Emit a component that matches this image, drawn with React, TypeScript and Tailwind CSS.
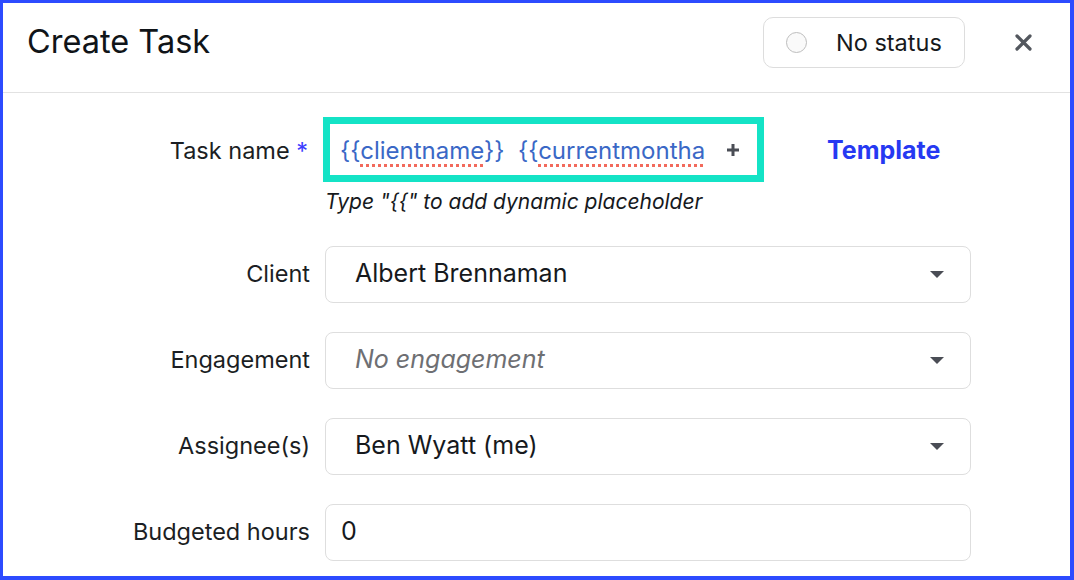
import React from 'react';

const Caret = () => (
  <svg width="14" height="7" viewBox="0 0 14 7" className="shrink-0">
    <path d="M0 0h14L7 7z" fill="#4a4d55" />
  </svg>
);

interface SelectRowProps {
  label: string;
  value: string;
  placeholder?: boolean;
}

const SelectRow: React.FC<SelectRowProps> = ({ label, value, placeholder }) => (
  <div className="flex items-center">
    <div className="w-[322px] pr-[15px] text-right text-[23.5px] text-[#1b1e23]">{label}</div>
    <div className="flex h-[57px] w-[646px] items-center justify-between rounded-lg border border-[#dedede] pl-[29px] pr-[26px]">
      <span
        className={`text-[25px] ${placeholder ? 'italic text-[#6e6f73]' : 'text-[#16191d]'}`}
      >
        {value}
      </span>
      <Caret />
    </div>
  </div>
);

export default function App() {
  return (
    <div
      className="h-[580px] w-[1074px] overflow-hidden border-t-[3px] border-l-[3px] border-r-4 border-b-4 border-[#2d4bff] bg-white"
      style={{ fontFamily: 'Inter, "Noto Sans", sans-serif' }}
    >
      {/* Header */}
      <div className="flex h-[90px] items-center border-b border-[#e2e2e2] pb-[10px] pl-[24px] pr-[38px]">
        <h1 className="flex-1 text-[32.5px] font-normal text-[#101418]">Create Task</h1>
        <button className="flex h-[51px] w-[202px] items-center rounded-[10px] border border-[#dddddd] pl-[22px]">
          <span className="h-[21px] w-[21px] rounded-full border border-[#bdbdbd] bg-[#fafafa]" />
          <span className="ml-[29px] text-[23.5px] text-[#16191d]">No status</span>
        </button>
        <svg width="17" height="17" viewBox="0 0 17 17" className="ml-[50px]">
          <path d="M2 2l13 13M15 2L2 15" stroke="#53575e" strokeWidth="3.2" strokeLinecap="round" />
        </svg>
      </div>

      {/* Form */}
      <div className="pt-[24px]">
        <div className="flex items-center">
          <div className="w-[322px] pr-[17px] pt-[3px] text-right text-[23.5px] text-[#1b1e23]">
            Task name <span className="text-[#3b3cff]">*</span>
          </div>
          <div className="ml-[-2px] flex h-[65px] w-[441px] items-center border-[7px] border-[#14e3c6] pl-[10px] pr-[17px]">
            <div className="flex-1 overflow-hidden whitespace-pre pt-[2px] text-[24px] text-[#3a68c6]">
              {'{{'}
              <span className="underline decoration-[#f26a5c] decoration-dotted decoration-[3px] underline-offset-[5px]">
                clientname
              </span>
              {'}}  {{'}
              <span className="underline decoration-[#f26a5c] decoration-dotted decoration-[3px] underline-offset-[5px]">
                currentmonthandyear
              </span>
              {'}}'}
            </div>
            <svg width="14" height="14" viewBox="0 0 14 14" className="ml-[20px] shrink-0">
              <path d="M7 1v12M1 7h12" stroke="#4a4d55" strokeWidth="3" />
            </svg>
          </div>
          <span className="ml-[63px] pt-[3px] text-[25px] font-bold text-[#2639f2]">Template</span>
        </div>
        <div className="ml-[322px] mt-[4px] text-[21px] italic text-[#16191d]">
          Type "{'{{'}" to add dynamic placeholder
        </div>

        <div className="mt-[28px] flex flex-col gap-[29px]">
          <SelectRow label="Client" value="Albert Brennaman" />
          <SelectRow label="Engagement" value="No engagement" placeholder />
          <SelectRow label="Assignee(s)" value="Ben Wyatt (me)" />
          <div className="flex items-center">
            <div className="w-[322px] pr-[15px] text-right text-[23.5px] text-[#1b1e23]">Budgeted hours</div>
            <div className="flex h-[57px] w-[646px] items-center rounded-lg border border-[#dedede] pl-[15px]">
              <span className="text-[25px] text-[#16191d]">0</span>
            </div>
          </div>
        </div>
      </div>
    </div>
  );
}
